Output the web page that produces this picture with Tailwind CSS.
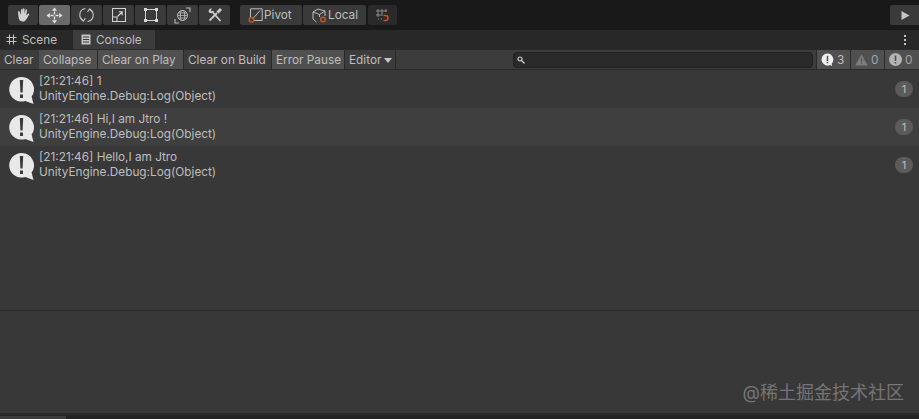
<!DOCTYPE html>
<html lang="zh">
<head>
  <meta charset="UTF-8">
  <title>Console</title>
  <script src="https://cdn.jsdelivr.net/npm/@tailwindcss/browser@4"></script>
</head>
<body class="bg-[#383838] overflow-hidden" style="font-family: 'Inter', 'Noto Sans CJK SC', sans-serif;">
  <div class="relative w-[919px] h-[419px] flex flex-col text-[11.8px] text-[#bebebe]">

    <!-- top toolbar -->
    <div class="h-[30px] bg-[#191919] flex items-start pt-[5px] pl-[8px] shrink-0">
      <div class="flex gap-px">
        <div class="w-[30px] h-[20px] bg-[#3a3a3a] rounded-[2px] flex items-center justify-center">
          <svg width="16" height="16" viewBox="0 0 16 16" fill="#d2d2d2"><path d="M3.500 4.200c.5-.3 1 0 1.200.5L6 8V2.700c0-.5.4-.8.8-.8s.8.3.8.8V7l.3-5c0-.5.4-.8.8-.8s.8.4.8.9L9.600 7l.9-4.200c.1-.5.5-.7.9-.6.4.1.7.5.6 1L11.300 8.600l1.500-1.700c.4-.4.9-.4 1.200-.1.3.3.3.7 0 1.100l-2.500 4.100c-.8 1.400-1.800 2.600-3.700 2.600-2.200 0-3.400-1-4-3L3 5.200c-.1-.4.1-.8.5-1z"/></svg>
        </div>
        <div class="w-[31px] h-[20px] bg-[#6a6a6a] rounded-[2px] flex items-center justify-center">
          <svg width="17" height="17" viewBox="0 0 17 17" fill="#e4e4e4"><path d="M8.500 4.500v3M8.500 9.500v3M4.500 8.500h3M9.500 8.500h3" fill="none" stroke="#e4e4e4" stroke-width="1.300"/><path d="M8.500 .5 11 3.800H6zM8.500 16.500 6 13.200h5zM.5 8.500 3.800 6v5zM16.500 8.500 13.200 11V6z"/></svg>
        </div>
        <div class="w-[31px] h-[20px] bg-[#3a3a3a] rounded-[2px] flex items-center justify-center">
          <svg width="15" height="16" viewBox="0 0 15 16" fill="none" stroke="#c4c4c4" stroke-width="1.100"><path d="M6.500 1.500C3 2 .8 4.800.8 8c0 2.500 1.200 4.500 3.200 5.700"/><path d="M8.500 14.500C12 14 14.200 11.200 14.200 8c0-2.500-1.200-4.500-3.200-5.700"/><path d="M1.500 10.500 4.300 14l2.200-2.800M13.500 5.500 10.700 2 8.500 4.800"/></svg>
        </div>
        <div class="w-[31px] h-[20px] bg-[#3a3a3a] rounded-[2px] flex items-center justify-center">
          <svg width="14" height="14" viewBox="0 0 14 14" fill="none" stroke="#d2d2d2" stroke-width="1.100"><path d="M.5.500h13v13H.5z"/><path d="M.5 9H5v4.500"/><path d="M5.500 8.500 10 4M6.800 3.800h3.400v3.400"/></svg>
        </div>
        <div class="w-[31px] h-[20px] bg-[#3a3a3a] rounded-[2px] flex items-center justify-center">
          <svg width="14" height="14" viewBox="0 0 14 14" fill="#d8d8d8" stroke="#d2d2d2"><path d="M1.500 1.500h11v11h-11z" fill="none"/><path d="M0 0h3v3H0zM11 0h3v3h-3zM0 11h3v3H0zM11 11h3v3h-3z" stroke="none"/></svg>
        </div>
        <div class="w-[31px] h-[20px] bg-[#3a3a3a] rounded-[2px] flex items-center justify-center">
          <svg width="17" height="17" viewBox="0 0 17 17" fill="none" stroke="#b8b8b8" stroke-width="1"><circle cx="8.500" cy="8.500" r="5"/><ellipse cx="8.500" cy="8.500" rx="2.200" ry="5"/><path d="M3.500 8.500h10M4.300 6h8.400M4.300 11h8.400" stroke-width=".8"/><path d="M12 1h4v4M1 12v4h4" stroke-width="1.100"/></svg>
        </div>
        <div class="w-[31px] h-[20px] bg-[#3a3a3a] rounded-[2px] flex items-center justify-center">
          <svg width="16" height="16" viewBox="0 0 16 16" fill="none" stroke="#cdcdcd" stroke-width="1.800"><path d="M5 4.500 13.500 14"/><path d="M2 5.500C1 3.500 2.500 1.200 5 1.500L3.800 3.300 5 4.500 6.600 3.400C7 6 4.500 7 2 5.500z" fill="#cdcdcd" stroke="none"/><path d="M2.500 13.500 10 6"/><path d="M9.500 4.500 13 1l2 2-3.500 3.500z" fill="#cdcdcd" stroke="none"/></svg>
        </div>
      </div>
      <div class="flex gap-px ml-[10px]">
        <div class="w-[62px] h-[20px] bg-[#3a3a3a] rounded-[2px] flex items-center pl-[8px] gap-px">
          <svg class="shrink-0" width="15" height="15" viewBox="0 0 15 15" fill="none"><path d="M2.500 10V.8h11.700v11.700H5" stroke="#bdbdbd"/><path d="M5 10.500 12 2.500" stroke="#bdbdbd"/><circle cx="3.500" cy="11.800" r="2.300" stroke="#c8532b" stroke-width="1.400"/></svg>
          <span class="pt-[2px]">Pivot</span>
        </div>
        <div class="w-[63px] h-[20px] bg-[#3a3a3a] rounded-[2px] flex items-center pl-[9px] gap-px">
          <svg class="shrink-0" width="15" height="15" viewBox="0 0 15 15" fill="none" stroke="#bdbdbd"><path d="M1 4 6 1 13 3v5M1 4v7l3.500 3M1 4l6.500 2.500V9M7.500 6.500 13 3"/><circle cx="11" cy="11.500" r="2.300" stroke="#c8532b" stroke-width="1.400"/></svg>
          <span class="pt-[2px]">Local</span>
        </div>
      </div>
      <div class="w-[29px] h-[20px] bg-[#2a2a2a] rounded-[2px] ml-[2px] flex items-center justify-center">
        <svg width="15" height="15" viewBox="0 0 15 15" fill="none"><path d="M3 1v8M7 1v5M11 1v3M1 3h11M1 7h7" stroke="#8c8c8c"/><path d="M8.500 7.500h2a2.200 2.200 0 0 1 0 5h-2" stroke="#c8532b" stroke-width="1.400"/><path d="M3 11h1M6 11h1" stroke="#8c8c8c"/></svg>
      </div>
      <div class="ml-auto w-[29px] h-[20px] bg-[#3a3a3a] rounded-l-[2px] flex items-center justify-center">
        <svg width="10" height="11" viewBox="0 0 10 11" fill="#c4c4c4"><path d="M1.500 1 9.500 5.500 1.500 10z"/></svg>
      </div>
    </div>

    <!-- window tabs -->
    <div class="h-[19px] bg-[#282828] flex items-stretch shrink-0">
      <div class="w-[73px] flex items-center pl-[6px] gap-[5px]">
        <svg width="11" height="11" viewBox="0 0 11 11" fill="none" stroke="#c4c4c4"><path d="M3.500 .5v10M7.500 .5v10M.5 3.500h10M.5 7.500h10"/></svg>
        <span class="pt-[2px]">Scene</span>
      </div>
      <div class="w-[82px] bg-[#3c3c3c] flex items-center pl-[8px] gap-[5px]">
        <svg width="10" height="11" viewBox="0 0 10 11" fill="#c4c4c4"><path fill-rule="evenodd" d="M.5.500h9v10h-9zM2 2.500v1h6v-1zM2 5v1h6V5zM2 7.500v1h6v-1z"/></svg>
        <span class="pt-[2px]">Console</span>
      </div>
      <div class="ml-auto mr-[13px] flex flex-col justify-center gap-[2px]">
        <i class="block w-[2px] h-[2px] bg-[#c4c4c4]"></i>
        <i class="block w-[2px] h-[2px] bg-[#c4c4c4]"></i>
        <i class="block w-[2px] h-[2px] bg-[#c4c4c4]"></i>
      </div>
    </div>

    <!-- console toolbar -->
    <div class="h-[21px] bg-[#3c3c3c] border-y border-[#2a2a2a] flex items-stretch shrink-0">
      <div class="w-[39px] pl-[4px] pt-[2px] flex items-center">Clear</div>
      <div class="w-[59px] bg-[#505050] border-r border-[#2a2a2a] flex items-center pl-[4px] pt-[2px]">Collapse</div>
      <div class="w-[86px] bg-[#505050] border-r border-[#2a2a2a] flex items-center pl-[4px] pt-[2px]">Clear on Play</div>
      <div class="w-[88px] border-r border-[#2a2a2a] flex items-center pl-[4px] pt-[2px]">Clear on Build</div>
      <div class="w-[73px] bg-[#505050] border-r border-[#2a2a2a] flex items-center pl-[4px] pt-[2px]">Error Pause</div>
      <div class="w-[51px] border-r border-[#2a2a2a] flex items-center pl-[4px] pt-[2px] gap-[3px]">
        <span>Editor</span>
        <svg width="8" height="5" viewBox="0 0 8 5" fill="#c4c4c4"><path d="M0 0h8L4 5z"/></svg>
      </div>
      <div class="flex-1 flex items-center pl-[117px]">
        <div class="w-[300px] h-[16px] bg-[#2a2a2a] border border-[#212121] rounded-[4px] flex items-center pl-[3px]">
          <svg width="8" height="8" viewBox="0 0 8 8" fill="none" stroke="#d0d0d0" stroke-width="1.200"><circle cx="3" cy="3" r="2"/><path d="M4.500 4.500 7.500 7.500"/></svg>
        </div>
      </div>
      <div class="w-[34px] bg-[#505050] border-l border-[#2a2a2a] flex items-center pl-[4px] gap-[3px]">
        <svg width="13" height="14" viewBox="0 0 14 15"><path d="M7 .5a6.500 6.500 0 1 0 3 12.300l2 1.200-.5-2.600A6.500 6.500 0 0 0 7 .5z" fill="#f0f0f0"/><path d="M6.200 3h1.600v5.500H6.200zM6.200 9.500h1.600v1.600H6.200z" fill="#505050"/></svg>
        <span class="pt-[2px]">3</span>
      </div>
      <div class="w-[34px] bg-[#505050] border-l border-[#2a2a2a] flex items-center pl-[4px] gap-[3px]">
        <svg width="13" height="12" viewBox="0 0 14 13"><path d="M7 .5 13.800 12.500H.2z" fill="#7c7c7c"/><path d="M6.400 4.500h1.200V9H6.400zM6.400 10h1.200v1.200H6.400z" fill="#505050"/></svg>
        <span class="text-[#a4a4a4] pt-[2px]">0</span>
      </div>
      <div class="w-[35px] bg-[#505050] border-l border-[#2a2a2a] flex items-center pl-[4px] gap-[3px]">
        <svg width="13" height="13" viewBox="0 0 13 13"><circle cx="6.500" cy="6.500" r="6.500" fill="#b4b4b4"/><path d="M5.700 2.500h1.600V8H5.700zM5.700 9h1.600v1.600H5.700z" fill="#505050"/></svg>
        <span class="text-[#a4a4a4] pt-[2px]">0</span>
      </div>
    </div>

    <!-- log rows -->
    <div class="h-[241px] shrink-0 border-b border-[#2a2a2a] bg-[#383838] flex flex-col">
      <div class="h-[38px] bg-[#383838] flex items-center pl-[9px] pr-[6px]">
        <svg class="shrink-0 mt-[3px]" width="25" height="27" viewBox="0 0 25 27"><path d="M12.500 0a12.300 12.300 0 1 0 3.800 24L24.500 27 22.600 19.500A12.300 12.300 0 0 0 12.500 0z" fill="#e8e8e8"/><path d="M10.800 3h3.400l-.6 12.500h-2.200zM11 17.500h3V21h-3z" fill="#3a3a3a"/></svg>
        <div class="ml-[5px] leading-[15px] flex-1"><p>[21:21:46] 1</p><p>UnityEngine.Debug:Log(Object)</p></div>
        <div class="w-[18px] h-[16px] rounded-full bg-[#5b5b5b] text-center leading-[16px] text-[11px]">1</div>
      </div>
      <div class="h-[38px] bg-[#3f3f3f] flex items-center pl-[9px] pr-[6px]">
        <svg class="shrink-0 mt-[3px]" width="25" height="27" viewBox="0 0 25 27"><path d="M12.500 0a12.300 12.300 0 1 0 3.800 24L24.500 27 22.600 19.500A12.300 12.300 0 0 0 12.500 0z" fill="#e8e8e8"/><path d="M10.800 3h3.400l-.6 12.500h-2.200zM11 17.500h3V21h-3z" fill="#3a3a3a"/></svg>
        <div class="ml-[5px] leading-[15px] flex-1"><p>[21:21:46] Hi,I am Jtro !</p><p>UnityEngine.Debug:Log(Object)</p></div>
        <div class="w-[18px] h-[16px] rounded-full bg-[#5b5b5b] text-center leading-[16px] text-[11px]">1</div>
      </div>
      <div class="h-[38px] bg-[#383838] flex items-center pl-[9px] pr-[6px]">
        <svg class="shrink-0 mt-[3px]" width="25" height="27" viewBox="0 0 25 27"><path d="M12.500 0a12.300 12.300 0 1 0 3.800 24L24.500 27 22.600 19.500A12.300 12.300 0 0 0 12.500 0z" fill="#e8e8e8"/><path d="M10.800 3h3.400l-.6 12.500h-2.200zM11 17.500h3V21h-3z" fill="#3a3a3a"/></svg>
        <div class="ml-[5px] leading-[15px] flex-1"><p>[21:21:46] Hello,I am Jtro</p><p>UnityEngine.Debug:Log(Object)</p></div>
        <div class="w-[18px] h-[16px] rounded-full bg-[#5b5b5b] text-center leading-[16px] text-[11px]">1</div>
      </div>
    </div>

    <!-- detail area -->
    <div class="flex-1 bg-[#383838] flex items-end justify-end pr-[15px] pb-[9px]">
      <span class="text-[18px] leading-[22px] text-[#757575]">@稀土掘金技术社区</span>
    </div>

    <!-- status bar -->
    <div class="h-[6px] bg-[#232323] border-t-2 border-[#2a2a2a] shrink-0 flex">
      <div class="w-[66px] mt-px bg-[#3c3c3c]"></div>
    </div>
  </div>
</body>
</html>
